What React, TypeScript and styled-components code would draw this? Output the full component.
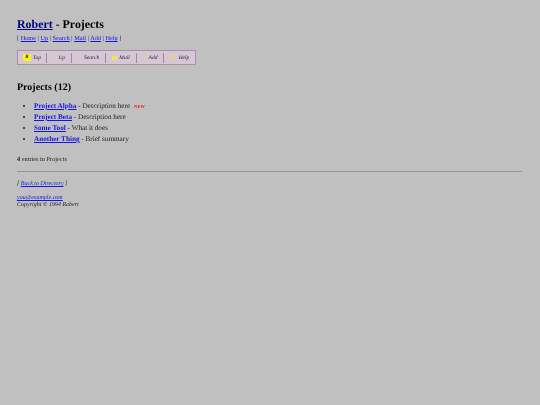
import React from "react";
import styled, { createGlobalStyle } from "styled-components";

const Global = createGlobalStyle`
  html, body { margin: 0; padding: 0; background: #c0c0c0; }
  body {
    font-family: "Liberation Serif", "Times New Roman", serif;
    color: #000;
    text-rendering: geometricPrecision;
  }
`;
const Page = styled.div`
  padding: 17px 18px 0 17px;
  min-height: 388px;
  font-size: 8px;
  filter: blur(0.45px);
`;
const Title = styled.h1`
  margin: 0;
  font-size: 11.9px;
  line-height: 15px;
  font-weight: bold;
`;
const Link = styled.a`
  color: #1414ea;
  text-decoration: underline;
`;
const DarkLink = styled(Link)`
  color: #000080;
`;
const NavLine = styled.p`
  margin: 3px 0 0;
  font-size: 6.3px;
  line-height: 8px;
  color: #222;
`;
const Toolbar = styled.div`
  display: flex;
  align-items: center;
  width: fit-content;
  height: 13px;
  margin-top: 7px;
  background: #d6c6d6;
  border: 1px solid #a890a8;
`;
const ToolItem = styled.span<{ $w: number }>`
  display: flex;
  align-items: center;
  justify-content: center;
  gap: 2px;
  width: ${p => p.$w}px;
  height: 10px;
  box-sizing: border-box;
  font-size: 5.5px;
  font-style: italic;
  color: #222;
  border-right: 1px solid #9a8a9a;
  &:last-child { border-right: none; }
`;
const ToolIcon = styled.span`
  display: inline-flex;
  align-items: center;
  justify-content: center;
  width: 8px;
  height: 7px;
  font-size: 5px;
  font-weight: bold;
  color: #222;
  background: #fbf310;
  border-radius: 1px;
`;
const Glyph = styled.span`
  color: #f2e040;
  font-size: 7px;
  font-weight: bold;
  font-style: normal;
`;
const MailGlyph = styled.span`
  width: 5px;
  height: 4px;
  background: #f0e468;
`;
const Heading = styled.h2`
  margin: 16px 0 0;
  font-size: 10px;
  line-height: 13px;
  font-weight: bold;
`;
const List = styled.ul`
  margin: 7px 0 0;
  padding: 0 0 0 17px;
  font-size: 7.2px;
  line-height: 11px;
  color: #222;
`;
const Entry = styled.li``;
const EntryLink = styled(Link)`
  font-weight: bold;
`;
const NewTag = styled.span`
  margin-left: 4px;
  font-size: 4.6px;
  font-style: italic;
  font-weight: bold;
  color: #e01010;
`;
const Count = styled.p`
  margin: 11px 0 0;
  font-size: 6.3px;
  line-height: 8px;
  color: #222;
`;
const Rule = styled.hr`
  margin: 7px 0 0;
  border: 0;
  height: 1px;
  background: #949494;
`;
const Back = styled.p`
  margin: 8px 0 0;
  font-size: 6px;
  line-height: 8px;
  font-style: italic;
  color: #222;
`;
const Footer = styled.address`
  margin: 7px 0 0;
  font-size: 6px;
  line-height: 7px;
  color: #222;
`;

const nav = ["Home", "Up", "Search", "Mail", "Add", "Help"];
const tools = [
  { label: "Top", w: 29, icon: <ToolIcon>R</ToolIcon> },
  { label: "Up", w: 25, icon: <Glyph>↑</Glyph> },
  { label: "Search", w: 34, icon: <Glyph>○</Glyph> },
  { label: "Mail", w: 31, icon: <MailGlyph /> },
  { label: "Add", w: 27, icon: <Glyph>+</Glyph> },
  { label: "Help", w: 31, icon: <Glyph>??</Glyph> },
];
const entries = [
  { name: "Project Alpha", desc: "Description here", isNew: true },
  { name: "Project Beta", desc: "Description here" },
  { name: "Some Tool", desc: "What it does" },
  { name: "Another Thing", desc: "Brief summary" },
];

export default function App() {
  return (
    <Page>
      <Global />
      <Title><DarkLink href="#">Robert</DarkLink> - Projects</Title>
      <NavLine>
        {"[ "}
        {nav.map((n, i) => (
          <React.Fragment key={n}>
            {i > 0 && " | "}
            <Link href="#">{n}</Link>
          </React.Fragment>
        ))}
        {" ]"}
      </NavLine>
      <Toolbar>
        {tools.map(t => (
          <ToolItem key={t.label} $w={t.w}>
            {t.icon}
            {t.label}
          </ToolItem>
        ))}
      </Toolbar>
      <Heading>Projects (12)</Heading>
      <List>
        {entries.map(e => (
          <Entry key={e.name}>
            <EntryLink href="#">{e.name}</EntryLink> - {e.desc}
            {e.isNew && <NewTag>NEW</NewTag>}
          </Entry>
        ))}
      </List>
      <Count><b>4</b> entries in Projects</Count>
      <Rule />
      <Back>[ <Link href="#">Back to Directory</Link> ]</Back>
      <Footer>
        <Link href="#">you@example.com</Link>
        <br />
        Copyright © 1994 Robert
      </Footer>
    </Page>
  );
}
